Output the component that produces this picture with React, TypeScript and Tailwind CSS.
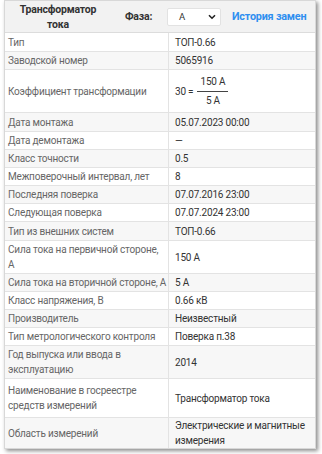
import React from "react";

type Row = { label: string; value: React.ReactNode; h: string; nowrap?: boolean };

const Fraction = () => (
  <div className="flex items-center gap-[4px]">
    <span>30 =</span>
    <div className="flex flex-col items-center">
      <span className="px-[2px] leading-[18px]">150 A</span>
      <div className="h-px w-[31px] bg-[#444]" />
      <span className="leading-[18px]">5 A</span>
    </div>
  </div>
);

const rows: Row[] = [
  { label: "Тип", value: "ТОП-0.66", h: "h-[19px]" },
  { label: "Заводской номер", value: "5065916", h: "h-[18px]" },
  { label: "Коэффициент трансформации", value: <Fraction />, h: "h-[43px]" },
  { label: "Дата монтажа", value: "05.07.2023 00:00", h: "h-[19px]" },
  { label: "Дата демонтажа", value: "—", h: "h-[18px]" },
  { label: "Класс точности", value: "0.5", h: "h-[18px]" },
  { label: "Межповерочный интервал, лет", value: "8", h: "h-[18px]" },
  { label: "Последняя поверка", value: "07.07.2016 23:00", h: "h-[18px]" },
  { label: "Следующая поверка", value: "07.07.2024 23:00", h: "h-[18px]" },
  { label: "Тип из внешних систем", value: "ТОП-0.66", h: "h-[19px]" },
  { label: "Сила тока на первичной стороне, А", value: "150 А", h: "h-[33px]" },
  { label: "Сила тока на вторичной стороне, А", value: "5 А", h: "h-[18px]", nowrap: true },
  { label: "Класс напряжения, В", value: "0.66 кВ", h: "h-[18px]" },
  { label: "Производитель", value: "Неизвестный", h: "h-[18px]" },
  { label: "Тип метрологического контроля", value: "Поверка п.38", h: "h-[18px]" },
  { label: "Год выпуска или ввода в эксплуатацию", value: "2014", h: "h-[33px]" },
  { label: "Наименование в госреестре средств измерений", value: "Трансформатор тока", h: "h-[39px]" },
  { label: "Область измерений", value: "Электрические и магнитные измерения", h: "h-[30px]" },
];

export default function App() {
  return (
    <div className="w-[322px] h-[454px] bg-white" style={{ fontFamily: 'Roboto, "Noto Sans", sans-serif' }}>
      <div className="ml-[4px] w-[312px] bg-white border border-[#d8d8d8] shadow-[2px_2px_4px_rgba(0,0,0,0.45)] text-[10px] tracking-[-0.2px] leading-[15px]">
        <div className="flex items-center h-[32px] bg-[#f2f2f2] border-b border-[#dcdcdc]">
          <div className="w-[104px] text-center font-bold text-[#333] leading-[15px] pl-[2px] text-[10.5px]">
            Трансформатор
            <br />
            тока
          </div>
          <div className="w-[58px] font-bold text-[#333] pl-[16px] text-[10.5px]">Фаза:</div>
          <div className="w-[54px] h-[18px] bg-white border border-[#e2e2e2] rounded-[2px] flex items-center justify-between pl-[11px] pr-[4px] text-[#333]">
            <span className="text-[9.5px]">A</span>
            <svg width="8" height="6" viewBox="0 0 8 6">
              <path d="M1 1.2 L4 4.2 L7 1.2" stroke="#222" strokeWidth="1.6" fill="none" />
            </svg>
          </div>
          <div className="ml-[11px] font-bold text-[#2f8ff0] whitespace-nowrap text-[10.8px]">История замен</div>
        </div>
        {rows.map((r, i) => (
          <div
            key={i}
            className={`flex ${r.h} ${i % 2 === 1 ? "bg-[#f7f7f7]" : "bg-white"} ${i < rows.length - 1 ? "border-b border-[#e3e3e3]" : ""}`}
          >
            <div className="w-[164px] shrink-0 border-r border-[#e3e3e3] pl-[3px] pr-[2px] flex items-center text-[#666] overflow-hidden">
              <span className={r.nowrap ? "whitespace-nowrap" : ""}>{r.label}</span>
            </div>
            <div className="flex-1 pl-[6px] pr-[4px] flex items-center text-[#333]">
              {typeof r.value === "string" ? <span>{r.value}</span> : r.value}
            </div>
          </div>
        ))}
      </div>
    </div>
  );
}
